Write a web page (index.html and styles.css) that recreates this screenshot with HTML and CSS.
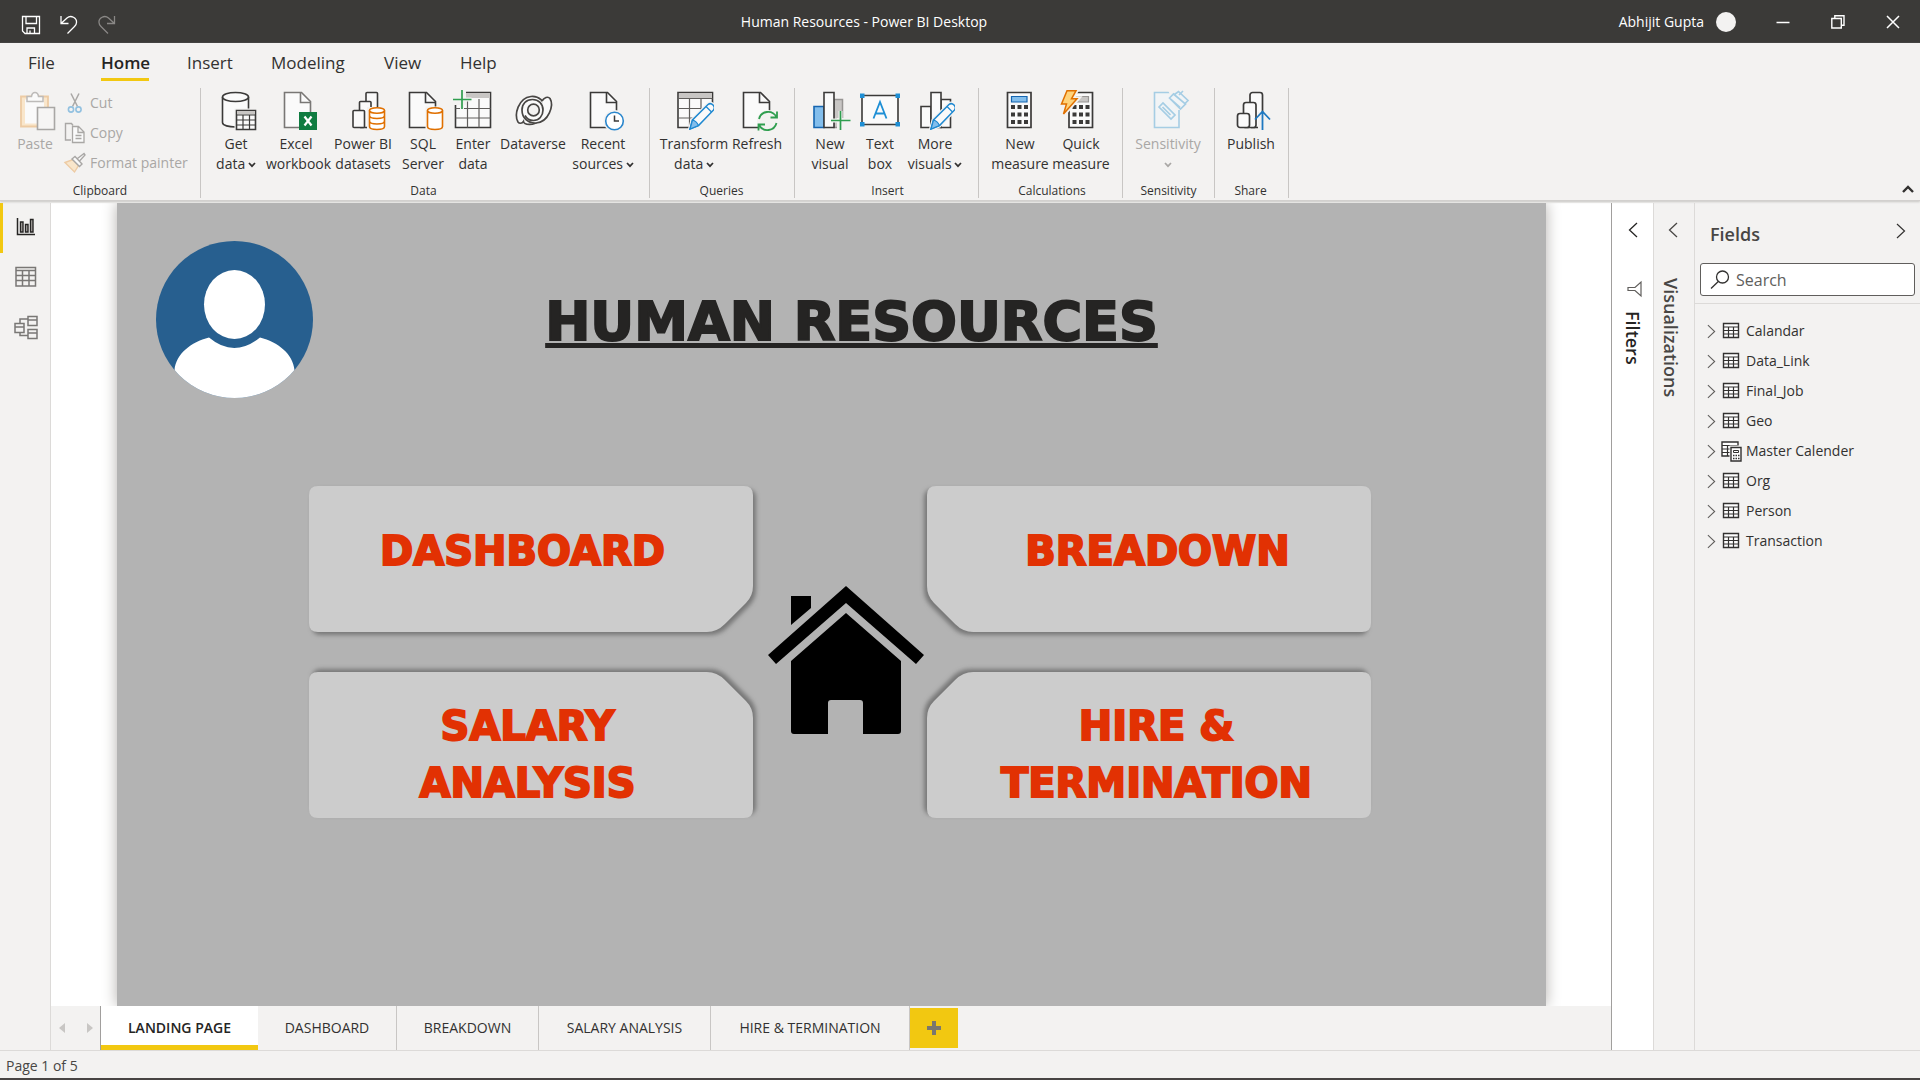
FILE: index.html
```html
<!DOCTYPE html>
<html lang="en">
<head>
<meta charset="utf-8">
<title>Human Resources - Power BI Desktop</title>
<link rel="stylesheet" href="styles.css">
</head>
<body>
<svg class="sprite" aria-hidden="true">
  <symbol id="i-table" viewBox="0 0 18 18"><path d="M1.5 1.5h15v14h-15z" fill="#fff" stroke="#323130" stroke-width="1.4"/><path d="M1.5 5h15M1.5 8.5h15M1.5 12h15M6.5 5v10.500M11.500 5v10.500" fill="none" stroke="#323130" stroke-width="1.200"/></symbol>
  <symbol id="i-right" viewBox="0 0 10 16"><path d="M1 1l7.500 7L1 15" fill="none" stroke="currentColor" stroke-width="1.200"/></symbol>
  <symbol id="i-left" viewBox="0 0 10 16"><path d="M9 1L1.500 8L9 15" fill="none" stroke="currentColor" stroke-width="1.300"/></symbol>
  <symbol id="i-down" viewBox="0 0 8 6"><path d="M1 1l3 3.200L7 1" fill="none" stroke="currentColor" stroke-width="1.700"/></symbol>
  <symbol id="i-doc" viewBox="0 0 40 40"><path d="M6.500 2.500h17l9 9V37.500h-26z" fill="#fafafa" stroke="currentColor" stroke-width="1.600"/><path d="M22.500 2.500v10h10" fill="none" stroke="currentColor" stroke-width="1.600"/></symbol>
  <symbol id="i-pencil" viewBox="0 0 40 40"><path d="M16 39l2.500-9L34 14.500q2.500-2 5 .5t.5 5L24.500 35.500z" fill="#fff" stroke="#f3f2f1" stroke-width="4"/><path d="M16 39l2.500-9L34 14.500q2.500-2 5 .5t.5 5L24.500 35.500z" fill="#fafafa" stroke="#1e88d0" stroke-width="1.500"/><path d="M16 39l2.500-9q4 1 6 5.500z" fill="#83beec" stroke="#1e88d0" stroke-width="1.200"/><path d="M32 16.500l5.500 5.500" stroke="#1e88d0" stroke-width="1.200"/></symbol>
</svg>

<header class="titlebar">
  <div class="quick">
    <button aria-label="Save"><svg width="20" height="20" viewBox="0 0 20 20"><path d="M1.500 1.500h17v17H4l-2.500-2.500zM5 1.500v7h10.500v-7M6 18.500v-5.500h7.500v5.500M9 18.500v-3" fill="none" stroke="#fff" stroke-width="1.300"/></svg></button>
    <button aria-label="Undo"><svg width="20" height="20" viewBox="0 0 20 20"><path d="M2 1v7.500h7.500M2 8.500L8 3c4-3.500 10 0 9.500 4.500 0 2-1 3-2 4L8.500 18.500" fill="none" stroke="#fff" stroke-width="1.300"/></svg></button>
    <button aria-label="Redo"><svg width="20" height="20" viewBox="0 0 20 20"><path d="M17.500 1v7.500H10M17.500 8.500L11.500 3c-4-3.500-10 0-9.500 4.500 0 2 1 3 2 4l7 7" fill="none" stroke="#8a8886" stroke-width="1.300"/></svg></button>
  </div>
  <div class="window-title">Human Resources - Power BI Desktop</div>
  <div class="window-tools">
    <span class="user">Abhijit Gupta</span>
    <span class="user-dot"></span>
    <button aria-label="Minimize"><svg width="14" height="14" viewBox="0 0 14 14"><path d="M.5 7.500h13" stroke="#fff" stroke-width="1.500"/></svg></button>
    <button aria-label="Restore"><svg width="14" height="14" viewBox="0 0 14 14"><path d="M.8 3.500h9.500v9.500H.8zM3.800 3.500V.8H13v9.500h-2.700" fill="none" stroke="#fff" stroke-width="1.400"/></svg></button>
    <button aria-label="Close"><svg width="14" height="14" viewBox="0 0 14 14"><path d="M1 1l12 12M13 1L1 13" stroke="#fff" stroke-width="1.500"/></svg></button>
  </div>
</header>

<section class="ribbon">
  <nav class="menu">
    <a href="#file" class="m-file">File</a>
    <a href="#home" class="m-home current">Home</a>
    <a href="#insert" class="m-insert">Insert</a>
    <a href="#modeling" class="m-modeling">Modeling</a>
    <a href="#view" class="m-view">View</a>
    <a href="#help">Help</a>
  </nav>
  <div class="groups">
    <div class="group g-clipboard">
      <div class="tools">
        <button class="tool w-70 dim"><svg class="ico" viewBox="0 0 40 40"><path d="M6 6.500h27v30H6z" fill="#f9e6cb" stroke="#edcba4" stroke-width="1.800"/><path d="M10 9.500h19v24H10z" fill="#fafafa"/><path d="M12 11.500v-5h4.500q.5-4 3.500-4t3.500 4H28v5z" fill="#fafafa" stroke="#bdbbb9" stroke-width="1.500"/><path d="M22.500 17.500h17v22h-17z" fill="#f6f5f4" stroke="#a9a7a5" stroke-width="1.600"/></svg>Paste</button>
        <div class="small-tools">
          <button class="dim"><svg width="22" height="22" viewBox="0 0 22 22"><path d="M7 1.500l6.500 13M15 1.500l-6.500 13" fill="none" stroke="#a9a7a5" stroke-width="1.500"/><circle cx="7" cy="17.500" r="2.600" fill="none" stroke="#92c1e0" stroke-width="1.600"/><circle cx="14.500" cy="17.500" r="2.600" fill="none" stroke="#92c1e0" stroke-width="1.600"/></svg>Cut</button>
          <button class="dim"><svg width="22" height="22" viewBox="0 0 22 22"><path d="M7 18H1.500V1.500h6l1.500 2" fill="none" stroke="#a9a7a5" stroke-width="1.400"/><path d="M8.500 4.500h6l5.500 5.500v10.500H8.500zM14 5v5.500h6M11.500 13.500h6M11.500 16.500h6" fill="#fafafa" stroke="#a9a7a5" stroke-width="1.300"/></svg>Copy</button>
          <button class="dim"><svg width="22" height="22" viewBox="0 0 22 22"><path d="M1 10.500l8-3 5.500 6-4 6.500z" fill="#f9e6cb" stroke="#edcba4" stroke-width="1.400"/><path d="M8 7l3-2.500 7 7.500-2.500 2.500zM13.500 6.500L20 1.500l1 1.500-5.500 6" fill="#fafafa" stroke="#a9a7a5" stroke-width="1.400"/></svg>Format painter</button>
        </div>
      </div>
      <div class="group-name">Clipboard</div>
    </div>

    <div class="group g-data">
      <div class="tools">
        <button class="tool w-60"><svg class="ico" viewBox="0 0 40 40"><path d="M6.500 7v25.500c0 6 26 6 26 0V7" fill="#fafafa" stroke="#3b3a39" stroke-width="1.600"/><ellipse cx="19.500" cy="7" rx="13" ry="4.500" fill="#fafafa" stroke="#3b3a39" stroke-width="1.600"/><path d="M18.500 18.500h22v22h-22z" fill="#f3f2f1"/><path d="M20.500 20.500h19v19h-19z" fill="#fafafa" stroke="#3b3a39" stroke-width="1.600"/><path d="M21 21h18v3.500H21z" fill="#c8c6c4"/><path d="M20.500 25h19M20.500 30h19M20.500 35h19M27 25v14M33.500 25v14" stroke="#3b3a39" stroke-width="1.200"/></svg>Get<br><span>data <svg class="dd"><use href="#i-down"/></svg></span></button>
        <button class="tool w-60"><svg class="ico" viewBox="0 0 40 40"><g transform="translate(2 0)" color="#797775"><use href="#i-doc" width="40" height="40"/></g><path d="M23 22h18v18H23z" fill="#107c41"/><path d="M28.500 26.500l7 9M35.500 26.500l-7 9" stroke="#fff" stroke-width="2.200"/></svg>Excel<br>workbook</button>
        <button class="tool w-74"><svg class="ico" viewBox="0 0 40 40"><g fill="#fafafa" stroke="#3b3a39" stroke-width="1.600"><rect x="23" y="2.500" width="11.500" height="35" rx="1"/><rect x="16.500" y="11.500" width="11.500" height="26" rx="1"/><rect x="10" y="20.500" width="11.500" height="17" rx="1"/></g><path d="M24 17h20v24H24z" fill="#f3f2f1"/><path d="M26.500 20.500v16c0 4 15 4 15 0v-16M26.500 25.500c0 4 15 4 15 0M26.500 31c0 4 15 4 15 0" fill="#fff" stroke="#e07000" stroke-width="1.600"/><ellipse cx="34" cy="20.500" rx="7.500" ry="2.800" fill="#fff" stroke="#e07000" stroke-width="1.600"/></svg>Power BI<br>datasets</button>
        <button class="tool w-46"><svg class="ico" viewBox="0 0 40 40"><use href="#i-doc" width="40" height="40"/><path d="M22.500 16.500h20v25h-20z" fill="#f3f2f1"/><path d="M24.500 20.500v16c0 4 15 4 15 0v-16" fill="#fff" stroke="#e07000" stroke-width="1.600"/><ellipse cx="32" cy="20.500" rx="7.500" ry="2.800" fill="#fff" stroke="#e07000" stroke-width="1.600"/></svg>SQL<br>Server</button>
        <button class="tool w-54"><svg class="ico" viewBox="0 0 40 40"><path d="M2.500 2.500h35v35h-35z" fill="#fafafa" stroke="#3b3a39" stroke-width="1.600"/><path d="M3 3h34v5H3z" fill="#c8c6c4"/><path d="M2.500 18.500h35M2.500 28h35M14.500 9v28.500M26 9v28.500" stroke="#605e5c" stroke-width="1.200"/><path d="M0 0h13v15H0z" fill="#f3f2f1"/><path d="M0 9.500h18.500M9 0v19" stroke="#f3f2f1" stroke-width="4"/><path d="M0 9.500h18.500M9 0v19" stroke="#2f9e4f" stroke-width="1.700"/></svg>Enter<br>data</button>
        <button class="tool w-66"><svg class="ico" viewBox="0 0 40 40"><g fill="none" stroke="#484644" stroke-width="1.700"><path d="M25 31C21 36 11 35 10.500 31.500C9 34 6 33.500 5 32C1 25 5 8 18 6.500c8-.8 14 5 14 13 0 6-4 11-10 11-6 0-10-4.500-10-10.500" fill="#fafafa"/><path d="M29 11c2-3.500 6-5 8-2.500C41 15 36 32 23 33c-8 .5-14-5-14-13 0-6 4-10.500 10.500-10.500 6 0 10.500 4 10.500 10.500" fill="#fafafa"/><circle cx="20.500" cy="20" r="5.800" fill="#f3f2f1"/><path d="M30 20c0 6-4 10.500-9.500 10.500-4 0-7-2-8.500-5"/></g></svg>Dataverse</button>
        <button class="tool w-74"><svg class="ico" viewBox="0 0 40 40"><g transform="translate(1 0)"><use href="#i-doc" width="40" height="40"/></g><circle cx="31.500" cy="31" r="11" fill="#f3f2f1"/><circle cx="31.500" cy="31" r="8.800" fill="#fff" stroke="#2a86cc" stroke-width="1.600"/><path d="M31.500 25.500v5.500H36" fill="none" stroke="#3b3a39" stroke-width="1.500"/></svg>Recent<br><span>sources <svg class="dd"><use href="#i-down"/></svg></span></button>
      </div>
      <div class="group-name">Data</div>
    </div>

    <div class="group g-queries">
      <div class="tools">
        <button class="tool w-74"><svg class="ico" viewBox="0 0 40 40"><path d="M4 2.500h34.500v35H4z" fill="#fafafa" stroke="#3b3a39" stroke-width="1.600"/><path d="M5 3h33v5H5z" fill="#c8c6c4"/><path d="M4 8.500h34.500M4 18.500h34.500M4 28h34.500M15.500 9v28.500M27 9v28.500" stroke="#605e5c" stroke-width="1.200"/><path d="M19 41l22-22v22z" fill="#f3f2f1"/><use href="#i-pencil" width="40" height="40"/></svg>Transform<br><span>data <svg class="dd"><use href="#i-down"/></svg></span></button>
        <button class="tool w-52"><svg class="ico" viewBox="0 0 40 40"><use href="#i-doc" width="40" height="40"/><circle cx="31" cy="31" r="11" fill="#f3f2f1"/><path d="M22 29c2-8 13-10 17.500-2M39.500 33c-2 8-13 10-17.500 2M40 21.500v6h-6.500M21.500 40.500v-6H28" fill="none" stroke="#2f9e4f" stroke-width="1.800"/></svg>Refresh</button>
      </div>
      <div class="group-name">Queries</div>
    </div>

    <div class="group g-insert">
      <div class="tools">
        <button class="tool w-50"><svg class="ico" viewBox="0 0 40 40"><path d="M24 9.500h8.500v28H24z" fill="#c8c6c4" stroke="#979593" stroke-width="1.500"/><path d="M4 16.500h10v21H4z" fill="#83beec" stroke="#1565b0" stroke-width="1.600"/><path d="M14 2.500h10v35H14z" fill="#fafafa" stroke="#3b3a39" stroke-width="1.600"/><path d="M27 28h14v12H27z" fill="#f3f2f1"/><path d="M21 30.500h19.500M30.500 21v19" stroke="#f3f2f1" stroke-width="4"/><path d="M21 30.500h19.500M30.500 21v19" stroke="#2f9e4f" stroke-width="1.700"/></svg>New<br>visual</button>
        <button class="tool w-50"><svg class="ico" viewBox="0 0 40 40"><path d="M2 5.500h36v29H2z" fill="#fafafa" stroke="#3b3a39" stroke-width="1.600"/><path d="M0 3.500h4.500V8H0zM35.500 3.500H40V8h-4.500zM0 32h4.500v4.500H0zM35.500 32H40v4.500h-4.500z" fill="#1e8fd5"/><path d="M13.500 28.500L20 12l6.500 16.500M15.500 23.500h9" fill="none" stroke="#1e8fd5" stroke-width="1.800"/></svg>Text<br>box</button>
        <button class="tool w-60"><svg class="ico" viewBox="0 0 40 40"><g fill="#fafafa" stroke="#3b3a39" stroke-width="1.600"><path d="M26 9.500h9.500v28H26z"/><path d="M6 16.500h10v21H6z"/><path d="M16 2.500h10v35H16z"/></g><use href="#i-pencil" width="40" height="40"/></svg>More<br><span>visuals <svg class="dd"><use href="#i-down"/></svg></span></button>
      </div>
      <div class="group-name">Insert</div>
    </div>

    <div class="group g-calc">
      <div class="tools">
        <button class="tool w-60"><svg class="ico" viewBox="0 0 40 40"><path d="M7.500 2.500H31v35H7.500z" fill="#fafafa" stroke="#3b3a39" stroke-width="1.700"/><path d="M11.500 6.500h15.500v5.500H11.500z" fill="#83beec" stroke="#1565b0" stroke-width="1.200"/><path d="M11 17h17M11 24.500h17M11 32h17" stroke="#3b3a39" stroke-width="4" stroke-dasharray="4 2.500"/></svg>New<br>measure</button>
        <button class="tool w-62"><svg class="ico" viewBox="0 0 40 40"><path d="M8 2.500h23.500v35H8z" fill="#fafafa" stroke="#3b3a39" stroke-width="1.700"/><path d="M15 6.500h12.500v5.500H15z" fill="#c8c6c4" stroke="#979593" stroke-width="1.200"/><path d="M11.500 17h17M11.500 24.500h17M11.500 32h17" stroke="#3b3a39" stroke-width="4" stroke-dasharray="4 2.500"/><path d="M6 .8h9l-4.500 8h5.500L2.500 24l3-10H.500z" fill="#f3f2f1" stroke="#f3f2f1" stroke-width="5"/><path d="M6 .8h9l-4.500 8h5.500L2.500 24l3-10H.500z" fill="#ffd37b" stroke="#e07000" stroke-width="1.500"/></svg>Quick<br>measure</button>
      </div>
      <div class="group-name">Calculations</div>
    </div>

    <div class="group g-sens">
      <div class="tools">
        <button class="tool w-74 dim"><svg class="ico" viewBox="0 0 40 40"><path d="M6.500 2.500h24.500v35H6.500z" fill="#f1f4f6" stroke="#a5cde4" stroke-width="1.600"/><path d="M20 0h21v20H28z" fill="#f3f2f1"/><g fill="#f1f4f6" stroke="#a5cde4" stroke-width="1.700"><path d="M11 17l4-4 12 12-4 4zM14.500 17l8 8"/><path d="M21.500 8l4-4 12 10-5 5zM26.500 4.500l4-3 9.500 9-3 3M31 5l4-4M23 9.500l9 8"/></g></svg>Sensitivity<br><span class="lone"><svg class="dd"><use href="#i-down"/></svg></span></button>
      </div>
      <div class="group-name">Sensitivity</div>
    </div>

    <div class="group g-share">
      <div class="tools">
        <button class="tool w-60"><svg class="ico" viewBox="0 0 40 40"><g fill="#fafafa" stroke="#3b3a39" stroke-width="1.700"><rect x="19" y="2.500" width="12.500" height="35" rx="2.500"/><rect x="12.500" y="12.500" width="12.500" height="25" rx="2.500"/><rect x="6.500" y="23.500" width="12" height="14" rx="2.500"/></g><path d="M27 22h6v18h-6z" fill="#f3f2f1"/><path d="M31.500 40V22M24 29.500l7.500-8 7.500 8" fill="none" stroke="#1e78c0" stroke-width="1.800"/></svg>Publish</button>
      </div>
      <div class="group-name">Share</div>
    </div>
    <button class="collapse" aria-label="Collapse ribbon"><svg width="12" height="8" viewBox="0 0 12 8"><path d="M1 7l5-5 5 5" fill="none" stroke="#323130" stroke-width="2.400"/></svg></button>
  </div>
</section>

<main class="workspace">
  <nav class="rail">
    <button class="active" aria-label="Report"><svg width="22" height="22" viewBox="0 0 22 22"><path d="M2.500 2v16.500H20" fill="none" stroke="#252423" stroke-width="1.500"/><path d="M5.500 6h2.500v10H5.500zM10.500 8.500H13V16h-2.500zM15.500 3.500H18V16h-2.500z" fill="#b3b0ad" stroke="#252423" stroke-width="1.400"/></svg></button>
    <button aria-label="Data"><svg width="22" height="22" viewBox="0 0 22 22"><path d="M1 1.500h19.500v18.500H1zM1 4.500h19.500M1 9.500h19.500M1 14.500h19.500M7.500 4.500V20M14 4.500V20" fill="none" stroke="#797775" stroke-width="1.500"/></svg></button>
    <button aria-label="Model"><svg width="24" height="24" viewBox="0 0 24 24"><path d="M1 8.500h9v9H1zM1 12h9M14 1.500h9v9h-9zM14 5h9M14 14.500h9v9h-9zM14 18h9M6 8.500V4h8M6 17.500V20.500h8" fill="none" stroke="#797775" stroke-width="1.500"/></svg></button>
  </nav>

  <div class="center">
    <div class="canvas">
      <article class="report">
        <div class="report-head">
          <svg class="person" viewBox="0 0 157 157" role="img" aria-label="Person"><defs><clipPath id="disc"><circle cx="78.500" cy="78.500" r="78.500"/></clipPath></defs><circle cx="78.500" cy="78.500" r="78.500" fill="#275f8f"/><g clip-path="url(#disc)" fill="#fff"><path d="M53 96.500q25 21 51 0C122 101 137 113 138.500 129V157H18.500V129C20 113 35 101 53 96.500z" /><ellipse cx="78.500" cy="63.500" rx="30.500" ry="34.500"/></g></svg>
          <h1>HUMAN RESOURCES</h1>
        </div>
        <div class="tiles">
          <a href="#dashboard" class="tile t-dash"><svg viewBox="0 0 444 146" preserveAspectRatio="none"><path d="M9 0H434Q443 0 443 9V100Q443 110 436 117L415 138Q407 146 397 146H9Q0 146 0 137V9Q0 0 9 0z"/></svg><span>DASHBOARD</span></a>
          <a href="#breakdown" class="tile t-break"><svg viewBox="0 0 444 146" preserveAspectRatio="none"><path d="M435 0H10Q1 0 1 9V100Q1 110 8 117L29 138Q37 146 47 146H435Q444 146 444 137V9Q444 0 435 0z"/></svg><span>BREADOWN</span></a>
          <svg class="house" viewBox="0 0 156 148" role="img" aria-label="Home"><path d="M78 0L156 69L148 78L78 17L8 78L0 69zM23 10H43V22L23 39zM78 27L133 75V145Q133 148 130 148H95V117Q95 114 92 114H63Q60 114 60 117V148H26Q23 148 23 145V75z"/></svg>
          <a href="#salary" class="tile t-salary"><svg viewBox="0 0 444 146" preserveAspectRatio="none"><path d="M9 146H434Q443 146 443 137V46Q443 36 436 29L415 8Q407 0 397 0H9Q0 0 0 9V137Q0 146 9 146z"/></svg><span>SALARY<br>ANALYSIS</span></a>
          <a href="#hire" class="tile t-hire"><svg viewBox="0 0 444 146" preserveAspectRatio="none"><path d="M435 146H10Q1 146 1 137V46Q1 36 8 29L29 8Q37 0 47 0H435Q444 0 444 9V137Q444 146 435 146z"/></svg><span>HIRE &amp;<br>TERMINATION</span></a>
        </div>
      </article>
    </div>
    <nav class="pages">
      <div class="pager">
        <button aria-label="Previous page"><svg width="6" height="10" viewBox="0 0 6 10"><path d="M6 0v10L0 5z" fill="#c8c6c4"/></svg></button>
        <button aria-label="Next page"><svg width="6" height="10" viewBox="0 0 6 10"><path d="M0 0v10l6-5z" fill="#c8c6c4"/></svg></button>
      </div>
      <a href="#p1" class="current p-157">LANDING PAGE</a>
      <a href="#p2" class="p-139">DASHBOARD</a>
      <a href="#p3" class="p-142">BREAKDOWN</a>
      <a href="#p4" class="p-172">SALARY ANALYSIS</a>
      <a href="#p5" class="p-199">HIRE &amp; TERMINATION</a>
      <button class="add" aria-label="New page"><svg width="14" height="14" viewBox="0 0 14 14"><path d="M7 0v14M0 7h14" stroke="#7a776f" stroke-width="4"/></svg></button>
    </nav>
  </div>

  <aside class="strip filters">
    <button aria-label="Expand filters"><svg width="10" height="16"><use href="#i-left"/></svg></button>
    <svg class="funnel" width="16" height="16" viewBox="0 0 16 16"><path d="M14 1v14L8 9.500H1v-3h7z" fill="none" stroke="#605e5c" stroke-width="1.200"/></svg>
    <h2>Filters</h2>
  </aside>
  <aside class="strip visuals">
    <button aria-label="Expand visualizations"><svg width="10" height="16"><use href="#i-left"/></svg></button>
    <h2>Visualizations</h2>
  </aside>
  <aside class="fields">
    <div class="fields-head"><h2>Fields</h2><button aria-label="Collapse fields"><svg width="10" height="16"><use href="#i-right"/></svg></button></div>
    <label class="search"><svg width="20" height="20" viewBox="0 0 20 20"><circle cx="12.500" cy="7" r="6" fill="none" stroke="#323130" stroke-width="1.300"/><path d="M8.300 11.500L1 18.500" stroke="#323130" stroke-width="1.300"/></svg><input type="text" placeholder="Search" aria-label="Search"></label>
    <ul>
      <li><button><svg class="chev"><use href="#i-right"/></svg><svg class="tbl"><use href="#i-table"/></svg>Calandar</button></li>
      <li><button><svg class="chev"><use href="#i-right"/></svg><svg class="tbl"><use href="#i-table"/></svg>Data_Link</button></li>
      <li><button><svg class="chev"><use href="#i-right"/></svg><svg class="tbl"><use href="#i-table"/></svg>Final_Job</button></li>
      <li><button><svg class="chev"><use href="#i-right"/></svg><svg class="tbl"><use href="#i-table"/></svg>Geo</button></li>
      <li><button><svg class="chev"><use href="#i-right"/></svg><svg class="tbl" viewBox="0 0 18 18"><path d="M0 0h16v14H0z" fill="#fff" stroke="#323130" stroke-width="1.400"/><path d="M0 3.500h16M0 7h16M0 10.500h16M5.500 3.500V14M11 3.500V14" stroke="#323130" stroke-width="1.200"/><path d="M7.500 3.500h12v15h-12z" fill="#f3f2f1"/><path d="M9 5.500h10v13.500H9z" fill="#fff" stroke="#323130" stroke-width="1.400"/><path d="M11.500 8.500h5v2h-5z" fill="none" stroke="#323130"/><path d="M11 13.500h6.500M11 16.500h6.500" stroke="#323130" stroke-width="1.400" stroke-dasharray="1.500 1"/></svg>Master Calender</button></li>
      <li><button><svg class="chev"><use href="#i-right"/></svg><svg class="tbl"><use href="#i-table"/></svg>Org</button></li>
      <li><button><svg class="chev"><use href="#i-right"/></svg><svg class="tbl"><use href="#i-table"/></svg>Person</button></li>
      <li><button><svg class="chev"><use href="#i-right"/></svg><svg class="tbl"><use href="#i-table"/></svg>Transaction</button></li>
    </ul>
  </aside>
</main>
<footer class="status">Page 1 of 5</footer>
</body>
</html>
```
FILE: styles.css
```css
* { box-sizing: border-box; }
body {
  margin: 0;
  min-height: 100vh;
  display: flex;
  flex-direction: column;
  background: #f3f2f1;
  color: #323130;
  font: 14px/20px "Open Sans", "Noto Sans", sans-serif;
}
button {
  margin: 0;
  padding: 0;
  border: 0;
  background: none;
  color: inherit;
  font: inherit;
}
a { color: inherit; text-decoration: none; }
svg { flex: none; overflow: visible; }
h1, h2, ul { margin: 0; padding: 0; }
ul { list-style: none; }
.sprite { position: absolute; width: 0; height: 0; }

/* Title bar */
.titlebar {
  height: 43px;
  display: flex;
  align-items: center;
  background: #3b3a38;
  color: #fff;
}
.quick {
  width: 130px;
  padding: 6px 0 0 21px;
  display: flex;
  gap: 18px;
}
.quick svg { display: block; }
.window-title { flex: 1; text-align: center; }
.window-tools {
  width: 322px;
  display: flex;
  align-items: center;
  justify-content: flex-end;
}
.user-dot {
  width: 20px;
  height: 20px;
  margin: 0 19px 0 12px;
  border-radius: 50%;
  background: #f3f2f1;
}
.window-tools button { width: 55px; height: 43px; padding-top: 4px; }

/* Ribbon */
.ribbon {
  position: relative;
  z-index: 1;
  border-bottom: 1px solid #d2d0ce;
  box-shadow: 0 1px 2px #c8c6c4;
  margin-bottom: 2px;
}
.menu {
  height: 45px;
  padding-left: 28px;
  display: flex;
  align-items: flex-start;
  font-size: 17px;
}
.menu a { padding: 10px 0 5px; white-space: nowrap; }
.m-file { width: 73px; }
.m-home { width: 48px; margin-right: 38px; }
.m-insert { width: 84px; }
.m-modeling { width: 113px; }
.m-view { width: 76px; }
.menu .current { border-bottom: 3px solid #f2c811; font-weight: 600; color: #252423; }
.groups { display: flex; height: 112px; }
.group {
  height: 110px;
  display: flex;
  flex-direction: column;
  justify-content: space-between;
  border-right: 1px solid #c8c6c4;
}
.g-clipboard { width: 201px; }
.g-data { width: 449px; padding-left: 5px; }
.g-queries { width: 145px; padding-left: 7px; }
.g-insert { width: 184px; padding-left: 10px; }
.g-calc { width: 144px; padding-left: 11px; }
.g-sens { width: 92px; padding-left: 8px; }
.g-share { width: 74px; padding-left: 6px; }
.tools { display: flex; }
.group-name { font-size: 12px; line-height: 14px; text-align: center; }
.g-data .group-name, .g-queries .group-name, .g-insert .group-name,
.g-calc .group-name, .g-sens .group-name, .g-share .group-name { padding-right: 8px; }
.tool {
  padding-top: 2px;
  text-align: center;
  white-space: nowrap;
  display: block;
  align-self: flex-start;
}
.ico { display: block; width: 40px; height: 40px; margin: 0 auto 4px; color: #3b3a39; }
.dd { width: 8px; height: 6px; margin: 0 0 1px -1px; }
.w-46 { width: 46px; } .w-50 { width: 50px; } .w-52 { width: 52px; } .w-54 { width: 54px; }
.w-60 { width: 60px; } .w-62 { width: 62px; } .w-66 { width: 66px; } .w-70 { width: 70px; } .w-74 { width: 74px; }
.dim { color: #a9a7a5; }
.small-tools { display: flex; flex-direction: column; }
.small-tools button {
  height: 30px;
  margin-left: -6px;
  display: flex;
  align-items: center;
  gap: 4px;
  white-space: nowrap;
}
.collapse { margin: 0 6px 6px auto; align-self: flex-end; line-height: 12px; }

/* Workspace */
.workspace { flex: 1; display: flex; }
.rail { width: 51px; border-right: 1px solid #dcdad8; }
.rail button {
  width: 50px;
  height: 50px;
  padding: 0 2px 2px 0;
  display: flex;
  align-items: center;
  justify-content: center;
  border-left: 3px solid transparent;
}
.rail .active { border-left-color: #f2c811; }
.center { flex: 1; min-width: 0; display: flex; flex-direction: column; }
.canvas { flex: 1; padding: 0 65px 0 66px; display: flex; background: #fff; overflow: hidden; }
.report {
  flex: 1;
  padding: 38px 175px 40px 39px;
  background: #b3b3b3;
  box-shadow: 0 0 14px #b3b0ad;
}
.report-head { display: flex; align-items: center; margin-right: -19px; }
.person { width: 157px; height: 157px; }
h1 {
  flex: 1;
  padding-top: 4px;
  text-align: center;
  font: bold 54px/64px "DejaVu Sans", sans-serif;
  -webkit-text-stroke: 2px #252423;
  color: #252423;
  text-decoration: underline;
  text-decoration-thickness: 5px;
  text-decoration-skip-ink: none;
  white-space: nowrap;
}
.tiles {
  margin: 88px 0 0 153px;
  display: grid;
  grid-template-columns: 1fr 172px 1fr;
  grid-template-rows: 146px 146px;
  row-gap: 40px;
}
.tile {
  position: relative;
  display: flex;
  align-items: center;
  justify-content: center;
  text-align: center;
  color: #e23103;
  font: bold 40px/57px "DejaVu Sans", sans-serif;
  -webkit-text-stroke: 2px #e23103;
}
.tile svg { position: absolute; inset: 0; width: 100%; height: 100%; fill: #ccc; stroke: none; }
.tile span { position: relative; }
.t-dash { padding: 0 18px 16px 0; }
.t-break { grid-column: 3; padding: 0 0 16px 18px; }
.t-salary { grid-row: 2; padding: 20px 8px 0 0; }
.t-hire { grid-row: 2; grid-column: 3; padding: 20px 0 0 16px; }
.t-dash svg { filter: drop-shadow(3px 3px 2px #777); }
.t-break svg { filter: drop-shadow(-3px 3px 2px #777); }
.t-salary svg { filter: drop-shadow(3px -3px 2px #777); }
.t-hire svg { filter: drop-shadow(-3px -3px 2px #777); }
.house {
  grid-column: 2;
  grid-row: 1 / 3;
  width: 156px;
  height: 148px;
  align-self: center;
  justify-self: end;
  margin: 16px 2px 0 0;
}

/* Page tabs */
.pages { height: 44px; display: flex; }
.pager { width: 50px; display: flex; align-items: center; justify-content: center; gap: 22px; border-right: 1px solid #a19f9d; }
.pager button { line-height: 10px; }
.pages a {
  padding-top: 12px;
  text-align: center;
  white-space: nowrap;
  border-right: 1px solid #c8c6c4;
}
.pages .current { background: #fff; border-right: 0; border-bottom: 5px solid #f2c811; font-weight: 600; color: #252423; }
.p-157 { width: 157px; } .p-139 { width: 139px; } .p-142 { width: 142px; } .p-172 { width: 172px; } .p-199 { width: 199px; }
.add { width: 48px; height: 40px; margin-top: 2px; background: #f2c811; line-height: 12px; }

/* Side panes */
.strip {
  display: flex;
  flex-direction: column;
  align-items: center;
  padding-top: 19px;
  color: #252423;
}
.strip button { line-height: 16px; height: 16px; }
.strip h2 { writing-mode: vertical-rl; font-size: 18px; line-height: 20px; font-weight: 600; }
.filters { width: 42px; background: #fff; border-left: 1px solid #a19f9d; }
.funnel { margin: 43px 0 14px 4px; }
.visuals { width: 41px; border-left: 1px solid #dcdad8; padding-right: 2px; color: #484644; }
.visuals h2 { margin: 40px 4px 0 0; }
.fields { width: 226px; border-left: 1px solid #dcdad8; }
.fields-head { height: 60px; padding: 20px 14px 0 15px; display: flex; justify-content: space-between; align-items: flex-start; }
.fields-head button { line-height: 16px; }
.fields-head h2 { font-size: 18px; line-height: 22px; font-weight: 600; color: #484644; }
.search {
  height: 33px;
  margin: 0 5px;
  padding: 0 9px;
  display: flex;
  align-items: center;
  gap: 6px;
  background: #fff;
  border: 1px solid #605e5c;
  border-radius: 3px;
}
.search input { flex: 1; min-width: 0; border: 0; padding: 0; outline: 0; background: none; font: inherit; font-size: 16px; }
.search input::placeholder { color: #605e5c; opacity: 1; }
.fields ul { margin-top: 7px; padding-top: 12px; border-top: 1px solid #dcdad8; }
.fields li button { height: 30px; padding-left: 12px; display: flex; align-items: center; }
.chev { width: 9px; height: 15px; margin-right: 6px; color: #605e5c; }
.tbl { width: 18px; height: 18px; margin-right: 6px; }

/* Status bar */
.status {
  height: 30px;
  padding: 5px 6px 0;
  border-top: 1px solid #dcdad8;
  border-bottom: 2px solid #484443;
  color: #484644;
}
```
